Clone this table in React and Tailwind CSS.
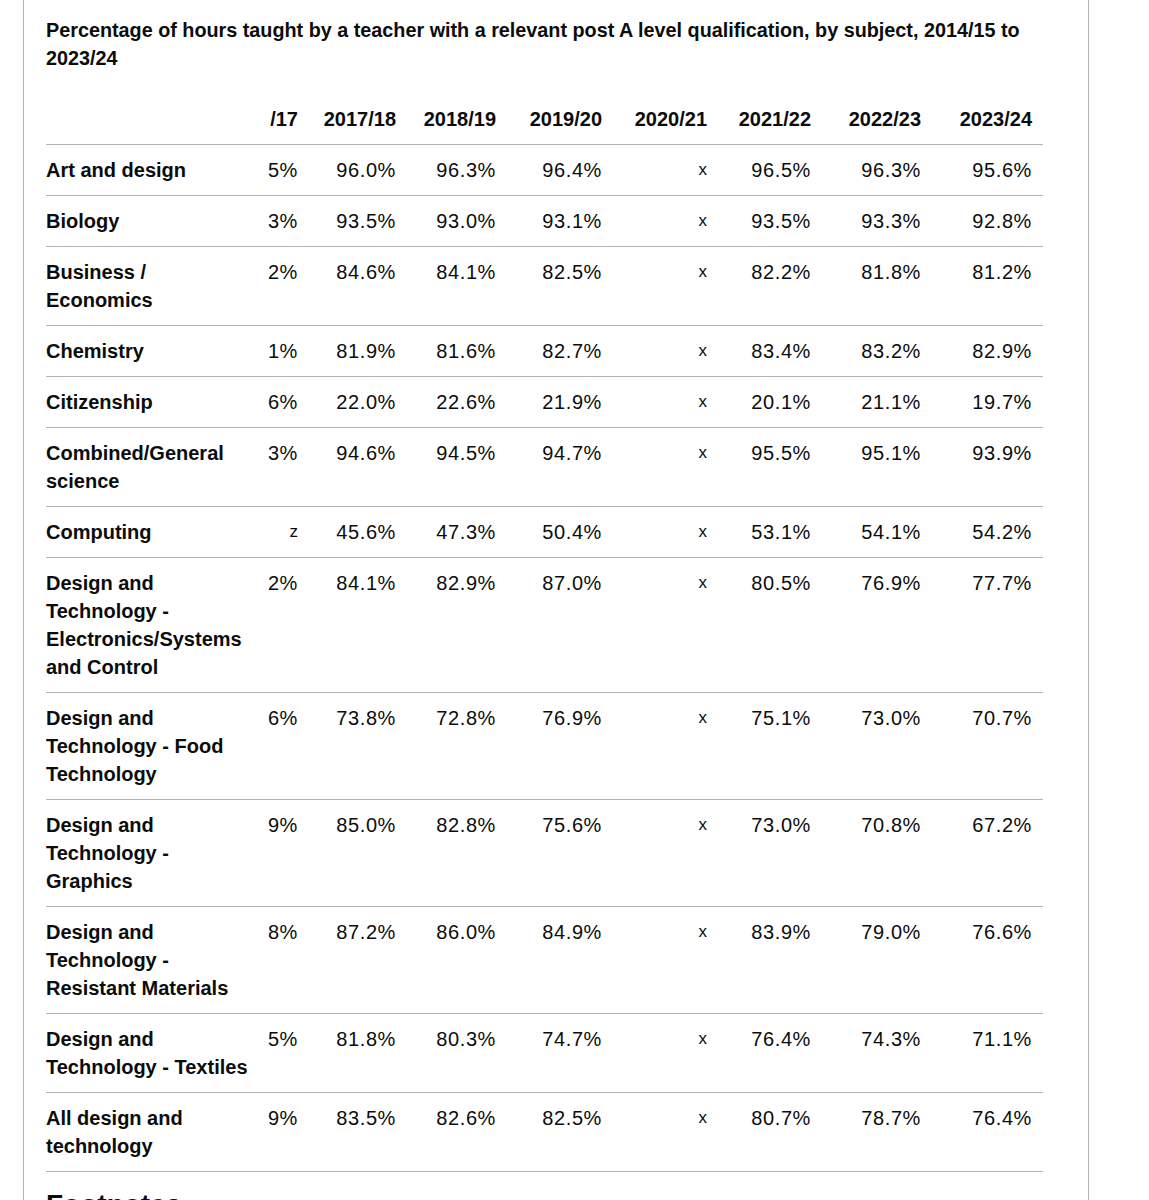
import React from 'react';

const years = ['/17', '2017/18', '2018/19', '2019/20', '2020/21', '2021/22', '2022/23', '2023/24'];

// widths taken from the right edge of each numeric column
const colWidths = ['w-[48px]', 'w-[98px]', 'w-[100px]', 'w-[106px]', 'w-[105px]', 'w-[104px]', 'w-[110px]', 'w-[122px] pr-[11px]'];

const rows = [
    { label: ['Art and design'], values: ['5%', '96.0%', '96.3%', '96.4%', 'x', '96.5%', '96.3%', '95.6%'] },
    { label: ['Biology'], values: ['3%', '93.5%', '93.0%', '93.1%', 'x', '93.5%', '93.3%', '92.8%'] },
    { label: ['Business /', 'Economics'], values: ['2%', '84.6%', '84.1%', '82.5%', 'x', '82.2%', '81.8%', '81.2%'] },
    { label: ['Chemistry'], values: ['1%', '81.9%', '81.6%', '82.7%', 'x', '83.4%', '83.2%', '82.9%'] },
    { label: ['Citizenship'], values: ['6%', '22.0%', '22.6%', '21.9%', 'x', '20.1%', '21.1%', '19.7%'] },
    { label: ['Combined/General', 'science'], values: ['3%', '94.6%', '94.5%', '94.7%', 'x', '95.5%', '95.1%', '93.9%'] },
    { label: ['Computing'], values: ['z', '45.6%', '47.3%', '50.4%', 'x', '53.1%', '54.1%', '54.2%'] },
    { label: ['Design and', 'Technology -', 'Electronics/Systems', 'and Control'], values: ['2%', '84.1%', '82.9%', '87.0%', 'x', '80.5%', '76.9%', '77.7%'] },
    { label: ['Design and', 'Technology - Food', 'Technology'], values: ['6%', '73.8%', '72.8%', '76.9%', 'x', '75.1%', '73.0%', '70.7%'] },
    { label: ['Design and', 'Technology -', 'Graphics'], values: ['9%', '85.0%', '82.8%', '75.6%', 'x', '73.0%', '70.8%', '67.2%'] },
    { label: ['Design and', 'Technology -', 'Resistant Materials'], values: ['8%', '87.2%', '86.0%', '84.9%', 'x', '83.9%', '79.0%', '76.6%'] },
    { label: ['Design and', 'Technology - Textiles'], values: ['5%', '81.8%', '80.3%', '74.7%', 'x', '76.4%', '74.3%', '71.1%'] },
    { label: ['All design and', 'technology'], values: ['9%', '83.5%', '82.6%', '82.5%', 'x', '80.7%', '78.7%', '76.4%'] },
];

export default function App() {
    return (
        <div className="h-[1200px] overflow-hidden bg-white text-[#0b0c0c] font-['Liberation_Sans',Arial,sans-serif]">
            <div className="ml-[23px] w-[1066px] h-full border-x border-[#b1b4b6] pl-[22px] pt-4">
                <h2 className="text-[19.8px] leading-[28px] font-bold">
                    <span className="block whitespace-nowrap">
                        Percentage of hours taught by a teacher with a relevant post A level qualification, by subject, 2014/15 to
                    </span>
                    <span className="block">2023/24</span>
                </h2>

                <table className="mt-[22px] table-fixed border-collapse w-[997px] text-[20px] leading-[28px]">
                    <thead>
                        <tr className="border-b border-[#b1b4b6]">
                            <th className="w-[204px] py-[11px]"></th>
                            {years.map((y, i) => (
                                <th key={y} className={`${colWidths[i]} py-[11px] text-right font-bold whitespace-nowrap`}>
                                    {y}
                                </th>
                            ))}
                        </tr>
                    </thead>
                    <tbody>
                        {rows.map((row) => (
                            <tr key={row.label.join(' ')} className="border-b border-[#b1b4b6] align-top">
                                <th className="py-[11px] text-left font-bold">
                                    {row.label.map((line) => (
                                        <span key={line} className="block whitespace-nowrap">{line}</span>
                                    ))}
                                </th>
                                {row.values.map((v, i) => (
                                    <td
                                        key={i}
                                        className={`${colWidths[i]} py-[11px] text-right whitespace-nowrap ${v === 'x' || v === 'z' ? 'text-[17px]' : 'tracking-[0.6px]'}`}
                                    >
                                        {v}
                                    </td>
                                ))}
                            </tr>
                        ))}
                    </tbody>
                </table>

                <h2 className="mt-[15px] text-[28px] leading-[36px] font-bold">Footnotes</h2>
            </div>
        </div>
    );
}
